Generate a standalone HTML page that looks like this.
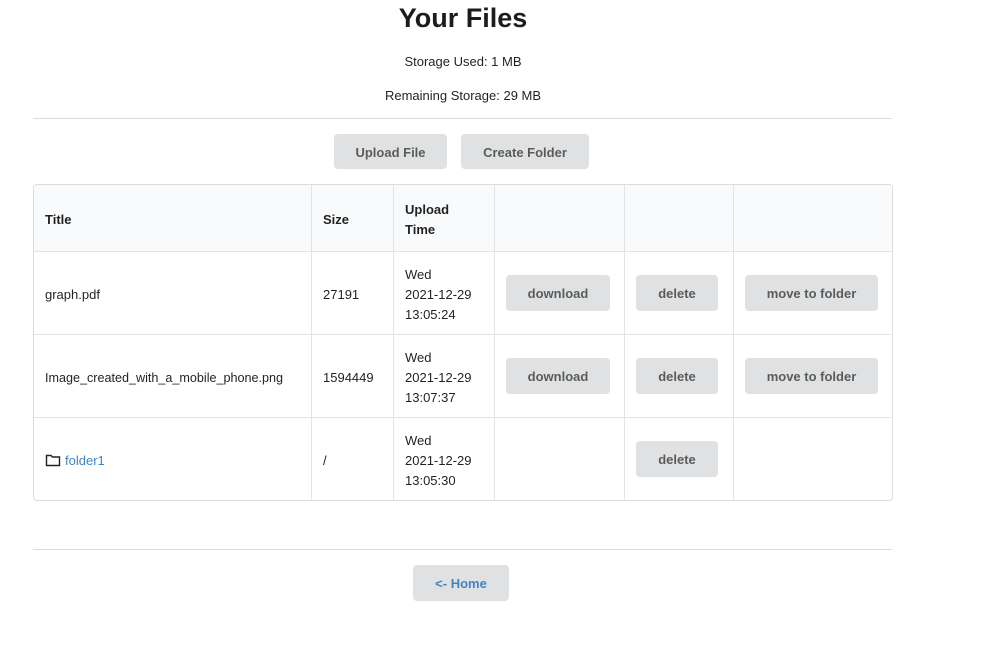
<!DOCTYPE html>
<html><head><meta charset="utf-8"><style>
*{box-sizing:border-box;margin:0;padding:0}
body{width:986px;height:656px;background:#fff;font-family:"Liberation Sans",sans-serif;color:rgba(0,0,0,.87);position:relative;overflow:hidden;font-size:13px}
.a{position:absolute}
.c{text-align:center}
.btn{position:absolute;background:#e0e1e2;border-radius:4px;color:rgba(0,0,0,.6);font-weight:bold;font-size:13px;display:flex;align-items:center;justify-content:center;padding-top:1px}
.hr{position:absolute;left:33px;width:859px;height:1px;background:#dcdcdd}
.v{position:absolute;width:1px;background:#e3e4e5}
.h{position:absolute;left:34px;width:857px;height:1px;background:#e3e4e5}
.t{position:absolute;line-height:20px}
</style></head><body>
<div class="a c" style="left:0;width:926px;top:3px;font-size:27px;font-weight:bold;color:#1b1c1d">Your Files</div>
<div class="a c" style="left:0;width:926px;top:54px">Storage Used: 1 MB</div>
<div class="a c" style="left:0;width:926px;top:88px">Remaining Storage: 29 MB</div>
<div class="hr" style="top:118px"></div>
<div class="btn" style="left:334px;top:134px;width:113px;height:35px">Upload File</div>
<div class="btn" style="left:461px;top:134px;width:128px;height:35px">Create Folder</div>

<div class="a" style="left:33px;top:184px;width:860px;height:317px;border:1px solid #dcdcdd;border-radius:4px"></div>
<div class="a" style="left:34px;top:185px;width:858px;height:66px;background:#f9fafb;border-radius:3px 3px 0 0"></div>
<div class="h" style="top:251px"></div>
<div class="h" style="top:334px"></div>
<div class="h" style="top:417px"></div>
<div class="v" style="left:311px;top:185px;height:315px"></div>
<div class="v" style="left:393px;top:185px;height:315px"></div>
<div class="v" style="left:494px;top:185px;height:315px"></div>
<div class="v" style="left:624px;top:185px;height:315px"></div>
<div class="v" style="left:733px;top:185px;height:315px"></div>

<div class="t" style="left:45px;top:210px;font-weight:bold">Title</div>
<div class="t" style="left:323px;top:210px;font-weight:bold">Size</div>
<div class="t" style="left:405px;top:200px;font-weight:bold">Upload<br>Time</div>

<div class="t" style="left:45px;top:285px">graph.pdf</div>
<div class="t" style="left:323px;top:285px">27191</div>
<div class="t" style="left:405px;top:265px">Wed<br>2021-12-29<br>13:05:24</div>
<div class="btn" style="left:506px;top:275px;width:104px;height:36px">download</div>
<div class="btn" style="left:636px;top:275px;width:82px;height:36px">delete</div>
<div class="btn" style="left:745px;top:275px;width:133px;height:36px">move to folder</div>

<div class="t" style="left:45px;top:368px;font-size:12.6px">Image_created_with_a_mobile_phone.png</div>
<div class="t" style="left:323px;top:368px">1594449</div>
<div class="t" style="left:405px;top:348px">Wed<br>2021-12-29<br>13:07:37</div>
<div class="btn" style="left:506px;top:358px;width:104px;height:36px">download</div>
<div class="btn" style="left:636px;top:358px;width:82px;height:36px">delete</div>
<div class="btn" style="left:745px;top:358px;width:133px;height:36px">move to folder</div>

<svg class="a" style="left:45px;top:453px" width="16" height="14" viewBox="0 0 16 14"><path d="M1.5 2.5h4.5l1.5 1.5h7v8.5h-13z" fill="none" stroke="#222" stroke-width="1.4"/></svg>
<div class="t" style="left:65px;top:451px;color:#4183c4">folder1</div>
<div class="t" style="left:323px;top:451px">/</div>
<div class="t" style="left:405px;top:431px">Wed<br>2021-12-29<br>13:05:30</div>
<div class="btn" style="left:636px;top:441px;width:82px;height:36px">delete</div>

<div class="hr" style="top:549px"></div>
<div class="btn" style="left:413px;top:565px;width:96px;height:36px;color:#4183c4">&lt;- Home</div>
</body></html>
